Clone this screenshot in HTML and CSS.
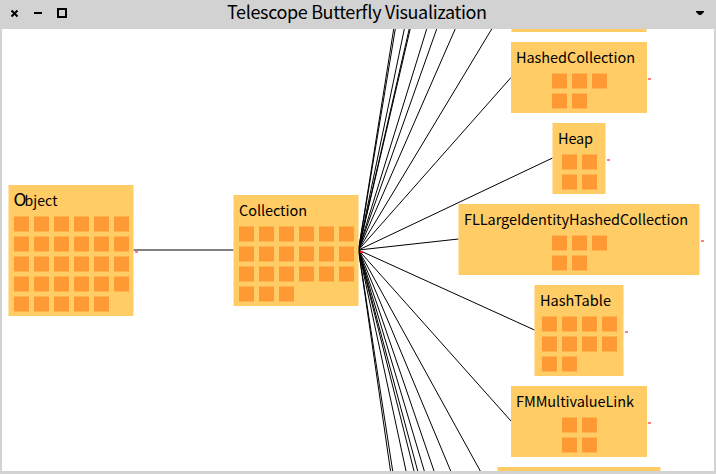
FILE: index.html
```html
<!DOCTYPE html>
<html lang="en">
<head>
<meta charset="utf-8">
<title>Telescope Butterfly Visualization</title>
<link rel="stylesheet" href="styles.css">
</head>
<body>
<div class="window">
  <header class="titlebar">
    <svg class="controls" width="68" height="29" viewBox="0 0 68 29">
      <path class="close" d="M11.5 10.5l6 6M17.5 10.5l-6 6"/>
      <rect x="34" y="12" width="8" height="2"/>
      <rect class="maximize" x="58" y="9" width="8" height="8"/>
    </svg>
    <svg class="caption" width="580" height="29" viewBox="68 0 580 29">
      <text class="title" x="227" y="19" textLength="260">Telescope Butterfly Visualization</text>
    </svg>
    <svg class="menu" width="68" height="29" viewBox="648 0 68 29">
      <path d="M696 11h8v1l-3 3h-2l-3-3z"/>
    </svg>
  </header>
  <main class="canvas">
    <svg width="712" height="442" viewBox="2 29 712 442">
      <!-- inheritance edges -->
      <path class="edge" d="M133.500 250H233.500"/>
      <path class="edge" d="M358.500 250L393.700 29M358.500 250L395.300 29M358.500 250L404.300 29M358.500 250L409.200 29M358.500 250L410.200 29M358.500 250L426.700 29M358.500 250L436.700 29M358.500 250L455.200 29M358.500 250L491.700 29"/>
      <path class="edge" d="M358.500 250L511 77.500M358.500 250L552.500 158M358.500 250L458.500 239M358.500 250L534.500 330M358.500 250L511 421"/>
      <path class="edge" d="M358.500 250L390.500 471M358.500 250L392.700 471M358.500 250L406 471M358.500 250L414 471M358.500 250L417.700 471M358.500 250L424.300 471M358.500 250L434 471M358.500 250L450.700 471M358.500 250L480.300 471"/>

      <!-- class nodes -->
      <g class="node">
        <rect x="8.500" y="185" width="125" height="131"/>
        <rect x="233.500" y="195" width="125" height="111"/>
        <rect x="511.500" y="20" width="135" height="12"/>
        <rect x="511" y="42" width="136" height="71"/>
        <rect x="552.500" y="123" width="53" height="71"/>
        <rect x="458.500" y="204" width="241" height="71"/>
        <rect x="534.500" y="285" width="89" height="91"/>
        <rect x="511" y="386" width="136" height="71"/>
        <rect x="497.500" y="467" width="163" height="10"/>
      </g>

      <!-- rows of method squares -->
      <path class="methods" d="M14 224h115M14 244h115M14 264h115M14 284h115M14 304h95"/>
      <path class="methods" d="M239 234h115M239 254h115M239 274h115M239 294h55"/>
      <path class="methods" d="M552 81h55M552 101h35"/>
      <path class="methods" d="M562 162h35M562 182h35"/>
      <path class="methods" d="M552 243h55M552 263h35"/>
      <path class="methods" d="M542 324h75M542 344h75M542 364h35"/>
      <path class="methods" d="M562 425h35M562 445h35"/>

      <!-- expansion markers -->
      <path class="marker" d="M135 252h3M648 79h3M607 160h3M701 241h3M625 332h3M648 423h3"/>
      <path class="marker strong" d="M360 252h3"/>

      <g class="label">
        <text class="initial" x="13.500" y="206">O</text>
        <text class="rest" x="24.500" y="206" textLength="33">bject</text>
        <text x="239" y="216" textLength="68">Collection</text>
        <text x="516" y="63" textLength="119">HashedCollection</text>
        <text x="558" y="144" textLength="35">Heap</text>
        <text x="464" y="225" textLength="224">FLLargeIdentityHashedCollection</text>
        <text x="540" y="306" textLength="71">HashTable</text>
        <text x="516" y="407" textLength="118">FMMultivalueLink</text>
      </g>
    </svg>
  </main>
</div>
</body>
</html>
```
FILE: styles.css
```css
body {
  margin: 0;
  font-family: "Noto Sans CJK SC", "Noto Sans", sans-serif;
}
.window {
  box-sizing: border-box;
  display: flex;
  flex-direction: column;
  width: 716px;
  height: 474px;
  background: #d2d2d2;
}
.titlebar {
  display: flex;
  flex: 0 0 29px;
}
.canvas {
  width: 712px;
  height: 442px;
  margin: 0 2px 3px;
  background: #fff;
}
svg { display: block; }
.caption { overflow: visible; }
.close { stroke: #000; stroke-width: 2; }
.maximize { fill: none; stroke: #000; stroke-width: 2; }
.title { font-size: 18px; }
.edge { fill: none; stroke: #000; stroke-width: 1; }
.node { fill: #fc6; }
.methods {
  fill: none;
  stroke: #f93;
  stroke-width: 15px;
  stroke-dasharray: 15 5;
}
.marker { stroke: #ff7f7f; stroke-width: 2; }
.marker.strong { stroke: #e02020; }
.label { font-size: 14.5px; }
.initial { font-size: 17.5px; }
.rest { font-size: 14px; }
```
